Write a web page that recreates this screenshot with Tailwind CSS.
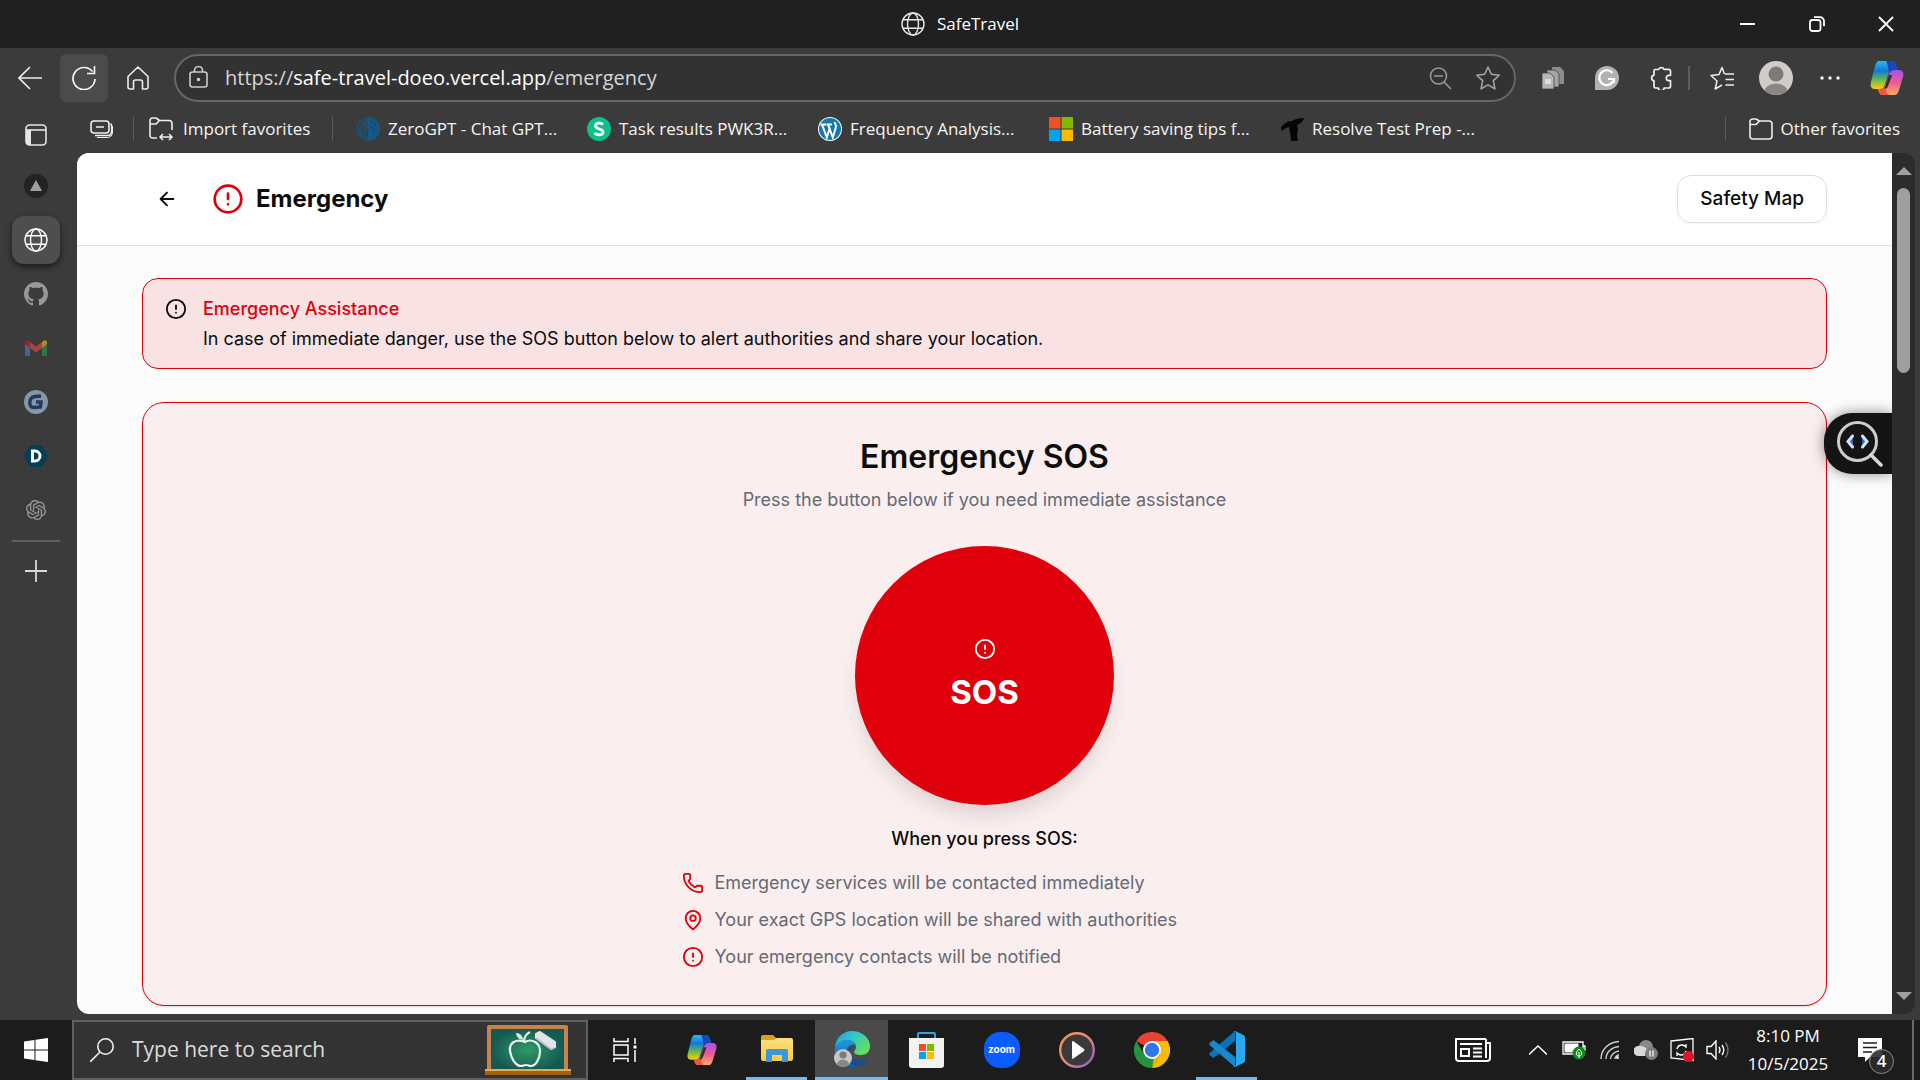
<!DOCTYPE html>
<html lang="en">
<head>
<meta charset="utf-8">
<title>SafeTravel</title>
<script src="https://cdn.jsdelivr.net/npm/@tailwindcss/browser@4"></script>
</head>
<body class="h-screen overflow-hidden bg-[#3b3b3b] font-['Open_Sans',sans-serif] text-white flex flex-col">

<svg class="absolute size-0" aria-hidden="true">
  <defs>
    <linearGradient id="cpA" x1="0" y1="0" x2="0" y2="1"><stop offset="0" stop-color="#2bb9f5"/><stop offset=".35" stop-color="#1279d8"/><stop offset=".65" stop-color="#5fb85a"/><stop offset="1" stop-color="#ffd000"/></linearGradient>
    <linearGradient id="cpB" x1="0" y1="0" x2="0" y2="1"><stop offset="0" stop-color="#a052f0"/><stop offset=".5" stop-color="#ee5a95"/><stop offset="1" stop-color="#ffab5c"/></linearGradient>
    <linearGradient id="edA" x1="0" y1="0" x2="1" y2=".6"><stop offset="0" stop-color="#1fa0dd"/><stop offset=".5" stop-color="#33c6c8"/><stop offset="1" stop-color="#63e05a"/></linearGradient>
    <linearGradient id="edB" x1="0" y1="0" x2="0" y2="1"><stop offset="0" stop-color="#1a9be0"/><stop offset="1" stop-color="#0f5cab"/></linearGradient>
    <linearGradient id="fold" x1="0" y1="0" x2="0" y2="1"><stop offset="0" stop-color="#ffe083"/><stop offset="1" stop-color="#fbc93c"/></linearGradient>
    <linearGradient id="mp" x1="0" y1="0" x2="1" y2="1"><stop offset="0" stop-color="#ff9a3c"/><stop offset=".5" stop-color="#e08a7a"/><stop offset="1" stop-color="#8a5bd6"/></linearGradient>
    <radialGradient id="board"><stop offset="0" stop-color="#2f9a68"/><stop offset="1" stop-color="#155a52"/></radialGradient>
    <symbol id="alert" viewBox="0 0 24 24"><g fill="none" stroke="currentColor" stroke-width="2" stroke-linecap="round" stroke-linejoin="round"><circle cx="12" cy="12" r="10"/><path d="M12 8v4M12 16h.01"/></g></symbol>
    <symbol id="globe" viewBox="0 0 24 24"><g fill="none" stroke="currentColor" stroke-width="1.4"><circle cx="12" cy="12" r="11"/><ellipse cx="12" cy="12" rx="5.5" ry="11"/><path d="M2 7.7h20M2 16.3h20"/></g></symbol>
    <symbol id="copilot" viewBox="0 0 34 36"><path d="M9 1h12c3 0 4 2 5 5l1 4h-4c-3 0-4 2-5 5l-3 9c-1 3-2 5-5 5H5c-4 0-5-3-4-7L5 6c1-3 2-5 4-5z" fill="url(#cpA)"/><path d="M16 1h5c3 0 4 2 5 5l1 4h-4c-2 0-3 1-4 3-1-5-1-9-3-12z" fill="#1746bd"/><path d="M25 10h4c4 0 5 3 4 7l-4 13c-1 3-2 5-5 5H13c-3 0-4-2-5-6h3c3 0 4-3 5-6l3-9c1-3 3-4 6-4z" fill="url(#cpB)"/><path d="M8 29h3c2 0 3-1 4-4 1 4 1 8 4 10h-6c-3 0-4-2-5-6z" fill="#f0553f"/><path d="M19 15h2c1 0 1 .6.700 1.400L18 26c-.6 2-1.400 2.600-2.600 2.600H14c1-1 1.500-2.600 2-4.600z" fill="#3b2a35"/></symbol>
    <symbol id="mslogo" viewBox="0 0 24 24"><path fill="#f25022" d="M0 0h11.5v11.5H0z"/><path fill="#7fba00" d="M12.5 0H24v11.5H12.5z"/><path fill="#00a4ef" d="M0 12.5h11.5V24H0z"/><path fill="#ffb900" d="M12.5 12.5H24V24H12.5z"/></symbol>
  </defs>
</svg>

<!-- Title bar -->
<header class="h-12 shrink-0 bg-[#202020] grid grid-cols-[1fr_auto_1fr] items-center">
  <span></span>
  <div class="flex items-center gap-3 text-[17px]">
    <svg class="size-6 text-[#e8e8e8]"><use href="#globe"/></svg><span>SafeTravel</span>
  </div>
  <div class="flex justify-end">
    <button class="w-[69px] h-12 grid place-items-center" aria-label="Minimize"><svg class="w-4 h-4" viewBox="0 0 16 16"><path d="M0 8h15" stroke="#fff" stroke-width="2"/></svg></button>
    <button class="w-[69px] h-12 grid place-items-center" aria-label="Restore"><svg class="w-4 h-4" viewBox="0 0 16 16" fill="none" stroke="#fff" stroke-width="1.8"><rect x="1" y="4" width="10.500" height="11" rx="2.500"/><path d="M5 1.200h6a4 4 0 0 1 4 4v5"/></svg></button>
    <button class="w-[69px] h-12 grid place-items-center" aria-label="Close"><svg class="w-4 h-4" viewBox="0 0 16 16"><path d="M1 1l14 14M15 1L1 15" stroke="#fff" stroke-width="1.800"/></svg></button>
  </div>
</header>

<!-- Toolbar -->
<div class="h-15 shrink-0 flex items-center">
  <button class="w-15 h-12 grid place-items-center" aria-label="Back"><svg class="size-6" viewBox="0 0 24 24" fill="none" stroke="#eee" stroke-width="1.600"><path d="M24 12H1M12 1L1 12l11 11"/></svg></button>
  <button class="w-12 h-12 rounded-md bg-[#4b4b4b] grid place-items-center" aria-label="Refresh"><svg class="size-6" viewBox="0 0 24 24" fill="none" stroke="#fff" stroke-width="1.600"><path d="M23 13A11 11 0 1 1 20.500 5.500M22.500 0v7.500H15"/></svg></button>
  <button class="w-15 h-12 grid place-items-center" aria-label="Home"><svg class="size-6" viewBox="0 0 24 24" fill="none" stroke="#eee" stroke-width="1.600" stroke-linejoin="round"><path d="M2 10.500L12 1l10 9.500V21a2 2 0 0 1-2 2h-3.500v-7a2 2 0 0 0-2-2h-5a2 2 0 0 0-2 2v7H4a2 2 0 0 1-2-2z"/></svg></button>
  <div class="ml-1.5 mr-2.5 h-12 flex-1 rounded-full border-2 border-[#666] bg-[#323232] flex items-center pl-3 pr-0.5">
    <svg class="size-6" viewBox="0 0 24 24" fill="none" stroke="#ccc" stroke-width="1.600"><rect x="2" y="6" width="17" height="15" rx="2.500"/><path d="M6.500 6V4.500a4 4 0 0 1 8 0V6"/><circle cx="10.500" cy="13.500" r="1" fill="#fff"/></svg>
    <a href="https://safe-travel-doeo.vercel.app/emergency" class="ml-[13px] text-[20px] leading-7 text-[#d6d6d6]">https://<span class="text-white">safe-travel-doeo.vercel.app</span>/emergency</a>
    <button class="ml-auto w-12 h-11 grid place-items-center" aria-label="Zoom"><svg class="size-6" viewBox="0 0 24 24" fill="none" stroke="#9a9a9a" stroke-width="1.500"><circle cx="10.500" cy="10" r="8"/><path d="M16 16l7 7M6 10h9"/></svg></button>
    <button class="w-12 h-11 grid place-items-center" aria-label="Add to favorites"><svg class="size-6" viewBox="0 0 24 24" fill="none" stroke="#a8a8a8" stroke-width="1.500" stroke-linejoin="round"><path d="M12 1l3.300 7.300 8 .9-6 5.400 1.700 8.200-7-4-7 4 1.700-8.200-6-5.400 8-.9z"/></svg></button>
  </div>
  <button class="w-[54px] h-12 grid place-items-center" aria-label="Documents extension"><svg class="size-6" viewBox="0 0 24 24"><path d="M11 1h8l4 4v13H11z" fill="#8c8c8c"/><path d="M6 4h8l4 4v13H6z" fill="#a4a4a4" stroke="#3b3b3b" stroke-width=".7"/><path d="M1 7h8l4 4v12H1z" fill="#b5b5b5" stroke="#3b3b3b" stroke-width=".7"/><path d="M4 13h6v5H4z" fill="#dcdcdc"/></svg></button>
  <button class="w-[54px] h-12 grid place-items-center" aria-label="Grammar extension"><svg class="size-6" viewBox="0 0 24 24"><path d="M12 0a12 12 0 1 1 0 24H0V12A12 12 0 0 1 12 0z" fill="#b2b2b2"/><path d="M17.500 7A7.400 7.400 0 1 0 19 13h-6M19 13v4" fill="none" stroke="#fff" stroke-width="2.200"/></svg></button>
  <button class="w-[54px] h-12 grid place-items-center" aria-label="Extensions"><svg class="size-6" viewBox="0 0 24 24" fill="none" stroke="#eee" stroke-width="1.700" stroke-linejoin="round"><path d="M6 3.500h3.500a3 3 0 0 1 5.500-.2h4.500a2 2 0 0 1 2 2v4H20a2.700 2.700 0 0 0 0 5.400h1.500V20a2 2 0 0 1-2 2H15a2.800 2.800 0 0 1-5.600 0H6.500A1.500 1.500 0 0 1 5 20.500v-5.600a2.900 2.900 0 0 1 0-5.700V5a1.500 1.500 0 0 1 1-1.500z"/></svg></button>
  <div class="w-[7px] h-6 border-l-2 border-[#5c5c5c]"></div>
  <button class="w-[54px] h-12 grid place-items-center" aria-label="Favorites"><svg class="size-6" viewBox="0 0 24 24" fill="none" stroke="#eee" stroke-width="1.500" stroke-linejoin="round"><path d="M14.500 8L12 1.500 9 8.500l-8 1 6 5.500-1.800 8L12 19M15 8h9M15.500 13.500H24M15.500 19H24"/></svg></button>
  <button class="w-[54px] h-12 grid place-items-center" aria-label="Profile"><svg class="size-[34px] rounded-full" viewBox="0 0 34 34"><path fill="#cfcdc9" d="M0 0h34v34H0z"/><circle cx="17" cy="13" r="7.500" fill="#7e7a78"/><ellipse cx="17" cy="32" rx="12" ry="9.500" fill="#8a8683"/></svg></button>
  <button class="w-[54px] h-12 grid place-items-center" aria-label="More"><svg class="w-5 h-1" viewBox="0 0 20 4" fill="#fff"><circle cx="2" cy="2" r="1.700"/><circle cx="10" cy="2" r="1.700"/><circle cx="18" cy="2" r="1.700"/></svg></button>
  <button class="w-15 h-12 mr-[3px] grid place-items-center" aria-label="Copilot"><svg class="w-[34px] h-9" aria-hidden="true"><use href="#copilot"/></svg></button>
</div>

<div class="flex-1 min-h-0 flex">
  <!-- Vertical tabs -->
  <nav class="w-[77px] shrink-0 flex flex-col pt-[3px]" aria-label="Tabs">
    <button class="w-[72px] h-12 grid place-items-center" aria-label="Tab actions"><svg class="size-6" viewBox="0 0 24 24"><rect x="2" y="2" width="20" height="20" rx="3.500" fill="none" stroke="#e6e6e6" stroke-width="1.600"/><path d="M2 7h5v15H5a3 3 0 0 1-3-3z" fill="#e6e6e6"/><path d="M2 7h20" stroke="#e6e6e6" stroke-width="1.600"/></svg></button>
    <button class="w-[72px] h-[54px] grid place-items-center" aria-label="Vercel"><svg class="size-6" viewBox="0 0 24 24"><circle cx="12" cy="12" r="12" fill="#232323"/><path d="M12 6l6 11H6z" fill="#a0a0a0"/></svg></button>
    <div class="w-[72px] h-[54px] grid place-items-center"><button class="size-12 rounded-xl bg-[#4e4e4e] shadow-[0_3px_6px_rgba(0,0,0,.55)] grid place-items-center" aria-label="SafeTravel"><svg class="size-6"><use href="#globe"/></svg></button></div>
    <button class="w-[72px] h-[54px] grid place-items-center" aria-label="GitHub"><svg class="size-6" viewBox="0 0 16 16" fill="#989898"><path d="M8 0C3.580 0 0 3.580 0 8c0 3.540 2.290 6.530 5.470 7.590.4.070.55-.17.55-.38 0-.19-.01-.82-.01-1.490-2.010.37-2.530-.49-2.690-.94-.09-.23-.48-.94-.82-1.130-.28-.15-.68-.52-.01-.53.63-.01 1.080.58 1.230.82.72 1.210 1.870.87 2.330.66.07-.52.28-.87.51-1.070-1.780-.2-3.640-.89-3.640-3.950 0-.87.31-1.590.82-2.150-.08-.2-.36-1.020.08-2.120 0 0 .67-.21 2.200.82.64-.18 1.320-.27 2-.27s1.360.09 2 .27c1.530-1.040 2.200-.82 2.200-.82.44 1.100.16 1.920.08 2.120.51.56.82 1.270.82 2.150 0 3.070-1.870 3.750-3.650 3.950.29.25.54.73.54 1.480 0 1.070-.01 1.930-.01 2.200 0 .21.15.46.55.38A8 8 0 0 0 16 8c0-4.420-3.580-8-8-8z"/></svg></button>
    <button class="w-[72px] h-[54px] grid place-items-center" aria-label="Gmail"><svg class="w-[22px] h-4" viewBox="0 0 22 16"><path fill="#4463a0" d="M0 3l5 4v9H1.500A1.500 1.500 0 0 1 0 14.500z"/><path fill="#33734a" d="M22 3l-5 4v9h3.500a1.500 1.500 0 0 0 1.500-1.500z"/><path fill="#b08d22" d="M17 2c3-3 5-1.500 5 1v1l-5 4z"/><path fill="#8c2b27" d="M5 2C2-1 0 .5 0 3v1l5 4z"/><path fill="#a8423a" d="M5 2l6 4.500L17 2v6l-6 4.500L5 8z"/></svg></button>
    <button class="w-[72px] h-[54px] grid place-items-center" aria-label="G site"><svg class="size-6" viewBox="0 0 24 24"><circle cx="12" cy="12" r="12" fill="#8298a6"/><path d="M17 6l-6 .5C7.500 7 5.800 9 5.800 12.500S7 17.500 10 17.500l6.500-.5.500-5H12" fill="none" stroke="#26375b" stroke-width="3.400"/></svg></button>
    <button class="w-[72px] h-[54px] grid place-items-center" aria-label="D site"><svg class="size-6" viewBox="0 0 24 24"><path d="M6 1h12l6 11-6 11H6L0 12z" fill="#053e57"/><path d="M8.500 7h2.500a5 5 0 0 1 0 10H8.500z" fill="none" stroke="#fff" stroke-width="3"/></svg></button>
    <button class="w-[72px] h-[54px] grid place-items-center" aria-label="ChatGPT"><svg class="size-5" viewBox="0 0 24 24" fill="#9a9a9a"><path d="M22.282 9.821a5.985 5.985 0 0 0-.516-4.911 6.046 6.046 0 0 0-6.510-2.900A6.065 6.065 0 0 0 4.981 4.182a5.985 5.985 0 0 0-3.998 2.900 6.046 6.046 0 0 0 .743 7.097 5.980 5.980 0 0 0 .511 4.911 6.051 6.051 0 0 0 6.515 2.900A5.985 5.985 0 0 0 13.260 24a6.056 6.056 0 0 0 5.772-4.206 5.990 5.990 0 0 0 3.998-2.900 6.056 6.056 0 0 0-.748-7.073zM13.260 22.430a4.476 4.476 0 0 1-2.876-1.041l.142-.080 4.778-2.758a.795.795 0 0 0 .393-.681v-6.737l2.020 1.169a.071.071 0 0 1 .038.052v5.583a4.504 4.504 0 0 1-4.495 4.493zM3.600 18.304a4.471 4.471 0 0 1-.535-3.014l.142.085 4.783 2.759a.771.771 0 0 0 .781 0l5.843-3.369v2.332a.080.080 0 0 1-.033.062L9.740 19.950a4.499 4.499 0 0 1-6.140-1.646zM2.341 7.896a4.485 4.485 0 0 1 2.365-1.973v5.678a.766.766 0 0 0 .388.677l5.814 3.354-2.020 1.169a.076.076 0 0 1-.071 0l-4.830-2.787A4.504 4.504 0 0 1 2.341 7.872zm16.596 3.856l-5.833-3.388 2.015-1.164a.076.076 0 0 1 .071 0l4.830 2.791a4.494 4.494 0 0 1-.676 8.105v-5.678a.790.790 0 0 0-.407-.666zm2.010-3.023l-.142-.085-4.774-2.782a.776.776 0 0 0-.785 0L9.409 9.230V6.897a.066.066 0 0 1 .028-.061l4.830-2.787a4.499 4.499 0 0 1 6.680 4.660zM8.307 12.863l-2.020-1.164a.080.080 0 0 1-.038-.057V6.075a4.499 4.499 0 0 1 7.375-3.454l-.142.081-4.778 2.758a.795.795 0 0 0-.393.681zm1.097-2.365l2.602-1.500 2.607 1.500v2.999l-2.597 1.500-2.607-1.500z"/></svg></button>
    <div class="mt-[3px] ml-3 w-12 h-0.5 bg-[#606060]"></div>
    <button class="mt-1 w-[72px] h-[50px] grid place-items-center" aria-label="New tab"><svg class="size-[22px]" viewBox="0 0 22 22"><path d="M11 0v22M0 11h22" stroke="#d8d8d8" stroke-width="1.800"/></svg></button>
  </nav>

  <div class="flex-1 min-w-0 flex flex-col">
    <!-- Favorites bar -->
    <div class="h-[45px] shrink-0 flex items-center pb-1 pl-[13px] pr-5 text-[17px] whitespace-nowrap text-[#f4f4f4]">
      <button class="w-[43px]" aria-label="Tab groups"><svg class="size-6" viewBox="0 0 24 24" fill="none" stroke="#eee" stroke-width="1.600"><rect x="1" y="4" width="18" height="12" rx="3"/><path d="M6 10h8M20.500 6.500c1 1 1.200 2 1.200 3V14c0 3-1.500 4.500-4 4.500H5"/><path d="M22.500 9v6c0 3.500-2 5.500-5 5.500H7" stroke-width="1"/></svg></button>
      <div class="w-4 h-6 border-l border-[#5a5a5a]"></div>
      <a href="#" class="flex items-center gap-2.5 w-[183px]"><svg class="w-6 h-6" viewBox="0 0 24 24" fill="none" stroke="#eee" stroke-width="1.600" stroke-linejoin="round"><path d="M8 21H3.500A2.500 2.500 0 0 1 1 18.500v-15A2.500 2.500 0 0 1 3.500 1H7l3.500 2.500H20a3 3 0 0 1 3 3V13M1 7h6l3.500-3.500M11 20h12M14 17l-3 3 3 3M20 17l3 3-3 3"/></svg>Import favorites</a>
      <div class="w-6 h-6 border-l border-[#5a5a5a]"></div>
      <a href="#" class="flex items-center gap-2 w-[231px]"><svg class="size-6" viewBox="0 0 24 24"><path d="M12 0a12 12 0 0 0 0 24z" fill="#274b63"/><path d="M12 0a12 12 0 0 1 0 24z" fill="#14588a"/><path d="M9 4c-4 1-6 4-5 8m5-3c-3 1-3 5-1 7m3-4v7M14 4c4 1 5 3 6 6m-6-1c3 1 4 4 4 7" fill="none" stroke="#2c3c48"/></svg>ZeroGPT - Chat GPT...</a>
      <a href="#" class="flex items-center gap-2 w-[231px]"><svg class="size-6" viewBox="0 0 24 24"><circle cx="12" cy="12" r="12" fill="#0dbf8c"/><path d="M16 7.500C14 5.500 8.500 5.500 8.500 9c0 3.500 7.500 2.500 7.500 6 0 3.500-6 3.500-8.500 1" fill="none" stroke="#fff" stroke-width="2.800"/></svg>Task results PWK3R...</a>
      <a href="#" class="flex items-center gap-2 w-[231px]"><svg class="size-6" viewBox="0 0 24 24"><circle cx="12" cy="12" r="12" fill="#fff"/><circle cx="12" cy="12" r="11" fill="#1477ad"/><path d="M4 7.500l4.800 13 3.200-10M10 7.500l4.800 13 3-10c1-3-1.300-3-1-5.500M2.500 7.500H8M8.500 7.500H14" fill="none" stroke="#fff" stroke-width="2"/></svg>Frequency Analysis...</a>
      <a href="#" class="flex items-center gap-2 w-[231px]"><svg class="size-6"><use href="#mslogo"/></svg>Battery saving tips f...</a>
      <a href="#" class="flex items-center gap-2 w-[231px]"><svg class="size-6" viewBox="0 0 24 24"><path d="M1 10c3-3 6-6 11-6l4-2 7-1 1 1-3 4-4 2 1 4-1 6 1 6h-7l-1-9-1-5-3 1-4 3-1-2z" fill="#050505"/></svg>Resolve Test Prep -...</a>
      <div class="ml-auto w-6 h-6 border-l border-[#5a5a5a]"></div>
      <a href="#" class="flex items-center gap-2"><svg class="size-6" viewBox="0 0 24 24" fill="none" stroke="#eee" stroke-width="1.600" stroke-linejoin="round"><path d="M1 4.500A2.500 2.500 0 0 1 3.500 2H7l3.500 2H20a3 3 0 0 1 3 3v12a3 3 0 0 1-3 3H4a3 3 0 0 1-3-3zM1 7.500h6L10.500 4"/></svg>Other favorites</a>
    </div>

    <div class="relative flex-1 min-h-0 mb-1.5 mr-[5px] flex rounded-xl overflow-hidden bg-[#2c2c2c] font-[Inter,sans-serif]">
      <!-- Web page -->
      <main class="flex-1 min-w-0 overflow-hidden bg-[#fcfcfc] text-[#0c0c0c]">
        <header class="h-[93px] bg-white border-b border-[#dcdde3] px-[65px] flex items-center">
          <button class="w-[50px] h-12 grid place-items-center" aria-label="Go back"><svg class="size-[22px]" viewBox="0 0 24 24" fill="none" stroke="currentColor" stroke-width="2" stroke-linecap="round" stroke-linejoin="round"><path d="M12 19l-7-7 7-7M19 12H5"/></svg></button>
          <svg class="ml-5 size-8 text-[#df000c]"><use href="#alert"/></svg>
          <h1 class="ml-3 text-[24px] leading-8 font-bold">Emergency</h1>
          <button class="ml-auto h-12 px-[22px] rounded-[14px] border border-[#dcdde3] shadow-xs text-[19px] font-medium">Safety Map</button>
        </header>

        <div class="px-[65px] pt-8">
          <section class="h-[91px] rounded-2xl border border-[#df000c] bg-[#f9e2e4] px-[22px] pt-[17px] flex gap-4 text-[18px] leading-[26px]">
            <svg class="mt-0.5 size-[22px]"><use href="#alert"/></svg>
            <div class="grid content-start gap-1">
              <h2 class="font-medium text-[#df000c]">Emergency Assistance</h2>
              <p>In case of immediate danger, use the SOS button below to alert authorities and share your location.</p>
            </div>
          </section>

          <section class="mt-[33px] h-[604px] rounded-[22px] border border-[#df000c] bg-[#fbeeee] shadow-sm flex flex-col items-center pt-8 text-[18px] leading-7">
            <h2 class="text-[32px] leading-11 font-semibold">Emergency SOS</h2>
            <p class="mt-[7px] text-[#646a75]">Press the button below if you need immediate assistance</p>
            <button class="mt-8 size-[259px] shrink-0 rounded-full bg-[#df000c] text-white shadow-[0_13px_20px_-4px_rgba(0,0,0,.13)] flex flex-col items-center justify-center gap-2.5">
              <svg class="size-[22px]"><use href="#alert"/></svg>
              <span class="text-[33px] leading-11 font-bold">SOS</span>
            </button>
            <h3 class="mt-5 font-medium">When you press SOS:</h3>
            <ul class="mt-4 w-full max-w-[606px] grid gap-[9px] text-[#646a75]">
              <li class="flex items-center gap-[11px]"><svg class="size-[22px] text-[#df000c]" viewBox="0 0 24 24" fill="none" stroke="currentColor" stroke-width="2" stroke-linecap="round" stroke-linejoin="round"><path d="M13.832 16.568a1 1 0 0 0 1.213-.303l.355-.465A2 2 0 0 1 17 15h3a2 2 0 0 1 2 2v3a2 2 0 0 1-2 2A18 18 0 0 1 2 4a2 2 0 0 1 2-2h3a2 2 0 0 1 2 2v3a2 2 0 0 1-.8 1.600l-.468.351a1 1 0 0 0-.292 1.233 14 14 0 0 0 6.392 6.384"/></svg>Emergency services will be contacted immediately</li>
              <li class="flex items-center gap-[11px]"><svg class="size-[22px] text-[#df000c]" viewBox="0 0 24 24" fill="none" stroke="currentColor" stroke-width="2" stroke-linecap="round" stroke-linejoin="round"><path d="M20 10c0 4.993-5.539 10.193-7.399 11.799a1 1 0 0 1-1.202 0C9.539 20.193 4 14.993 4 10a8 8 0 0 1 16 0"/><circle cx="12" cy="10" r="3"/></svg>Your exact GPS location will be shared with authorities</li>
              <li class="flex items-center gap-[11px]"><svg class="size-[22px] text-[#df000c]"><use href="#alert"/></svg>Your emergency contacts will be notified</li>
            </ul>
          </section>
        </div>
      </main>

      <button class="absolute right-[23px] top-[260px] w-17 h-[61px] rounded-l-[28px] bg-[#141414] shadow-[0_0_14px_rgba(0,0,0,.45)] flex items-center pl-[13px]" aria-label="Inspect code">
        <svg class="w-[46px] h-[46px]" viewBox="0 0 46 46" fill="none" stroke-linecap="round"><circle cx="20.500" cy="20.500" r="19" stroke="#cdcdcd" stroke-width="3"/><path d="M34 34l10 10" stroke="#d8d8d8" stroke-width="3.500"/><path d="M16 16v9l-3-4.500zM25 16v9l4-4.500z" fill="#1468f0"/><path d="M15.500 15l-4.500 5.500 4.500 5.500M25.500 15l4.500 5.500-4.500 5.500" stroke="#dce2ee" stroke-width="3"/></svg>
      </button>

      <!-- Scrollbar -->
      <div class="w-[23px] z-10 shrink-0 bg-[#2c2c2c] flex flex-col items-center pt-3.5 pb-3.5">
        <svg class="w-4 h-2" viewBox="0 0 16 8"><path d="M8 0l8 8H0z" fill="#a0a0a0"/></svg>
        <div class="mt-[13px] w-[13px] h-[185px] rounded-full bg-[#9f9f9f]"></div>
        <svg class="mt-auto w-4 h-2" viewBox="0 0 16 8"><path d="M8 8L0 0h16z" fill="#a0a0a0"/></svg>
      </div>
    </div>
  </div>
</div>

<!-- Taskbar -->
<footer class="h-15 shrink-0 bg-[#1c1c1c] flex items-stretch">
  <button class="w-[72px] grid place-items-center" aria-label="Start"><svg class="size-6" viewBox="0 0 24 24" fill="#fff"><path d="M0 3.400l10.500-1.500v9.600H0zM11.500 1.700L24 0v11.500H11.500zM0 12.500h10.500v9.600L0 20.600zM11.500 12.500H24V24l-12.500-1.700z"/></svg></button>
  <label class="w-[516px] border-2 border-[#606060] bg-[#333] flex items-center pl-4">
    <svg class="size-6 shrink-0" viewBox="0 0 24 24" fill="none" stroke="#f0f0f0" stroke-width="1.600"><circle cx="15.500" cy="8.500" r="7.700"/><path d="M10 14L0 24"/></svg>
    <input type="text" placeholder="Type here to search" aria-label="Search" class="ml-[18px] min-w-0 flex-1 bg-transparent text-[21px] placeholder:text-[#dcdcdc] outline-none">
    <svg class="mr-[15px] w-[86px] h-[52px] shrink-0" viewBox="0 0 86 52"><path d="M2 3q0-2 2-2h77q2 0 2 2v45H2z" fill="#c9824a"/><path d="M6 5h73v42H6z" fill="url(#board)"/><path d="M0 45h86v6H0z" fill="#a1640b"/><path d="M0 45h86v2H0z" fill="#e0aa63"/><path d="M40 18c-9-4-16 1-15 9 1 8 6 15 11 15 2 0 3-1 5-1s3 1 5 1c5 0 9-8 9-15 0-8-8-13-15-9zM39 18c0-5 2-8 6-10" fill="none" stroke="#e8f4ee" stroke-width="2.200"/><path d="M38 16c-5-1-7-4-7-7 4 0 7 3 7 7z" fill="#d7ebe0"/><path d="M51 10l4-2 15 10v5l-4 2-15-11z" fill="#e3e3ea" stroke="#e3e3ea" stroke-width="2" stroke-linejoin="round"/><path d="M51 14l15 11 3-1" fill="none" stroke="#b7b8c6" stroke-width="1.500"/></svg>
  </label>
  <div class="ml-0.5 flex gap-0.5">
    <button class="w-[73px] pr-1 grid place-items-center" aria-label="Task view"><svg class="size-6" viewBox="0 0 24 24" fill="none" stroke="#fff" stroke-width="1.500"><path d="M1 0v3.500h14V0M1 24v-3.500h14V24M1 7h14v10H1zM22 0v6M22 12v12"/><path d="M20.500 7.500h3v3h-3z" fill="#fff" stroke="none"/></svg></button>
    <button class="w-[73px] grid place-items-center" aria-label="Copilot"><svg class="w-[34px] h-8"><use href="#copilot"/></svg></button>
    <button class="w-[73px] px-1.5 flex flex-col items-center" aria-label="File Explorer"><span class="flex-1 grid place-items-center"><svg class="w-8 h-7" viewBox="0 0 32 28"><path d="M0 2q0-2 2-2h10l4 4v4H0z" fill="#e0a010"/><path d="M0 5h13l3-2h14q2 0 2 2v19q0 2-2 2H2q-2 0-2-2z" fill="url(#fold)"/><path d="M5 27V16q0-2 2-2h18q2 0 2 2v11h-6v-7H11v7z" fill="#3b97dd"/></svg></span><span class="h-[3px] w-full bg-[#76b9ed]"></span></button>
    <button class="w-[73px] bg-[#4a4a4a] flex flex-col items-center" aria-label="Microsoft Edge"><span class="flex-1 grid place-items-center"><svg class="size-9" viewBox="0 0 36 36"><path d="M1 18C1 8 8 0 18 0c10 0 18 7 18 15 0 6-4 9-9 9-4 0-7-1-7-3 0-1 2-2 2-5 0-4-4-7-9-7C7 9 2 13 1 18z" fill="url(#edA)"/><path d="M1 18C2 12 7 9 13 9c4 0 8 2 9 5-5-2-10 2-10 8 0 7 5 13 12 14-2 0-4 0-6 0C8 36 0 28 1 18z" fill="url(#edB)"/><path d="M12 22c0 7 6 14 13 13 4-1 8-4 9-8-5 4-13 3-17-1-2-2-2-5 1-9-4 0-6 2-6 5z" fill="#124f98"/><circle cx="9" cy="27" r="9" fill="#c8c6c3"/><circle cx="9" cy="24" r="3.600" fill="#7f7b78"/><path d="M3 33c1-6 11-6 12 0-3 4-9 4-12 0z" fill="#8a8683"/></svg></span><span class="h-[3px] w-full bg-[#76b9ed]"></span></button>
    <button class="w-[73px] grid place-items-center" aria-label="Microsoft Store"><svg class="w-[35px] h-9" viewBox="0 0 35 36"><path d="M9 8V2q0-1 1-1h15q1 0 1 1v6" fill="none" stroke="#2da4e8" stroke-width="2"/><path d="M0 6h35v27q0 3-3 3H3q-3 0-3-3z" fill="#f3f3f3"/><path fill="#f25022" d="M10 12h7v7h-7z"/><path fill="#7fba00" d="M18 12h7v7h-7z"/><path fill="#00a4ef" d="M10 20h7v7h-7z"/><path fill="#ffb900" d="M18 20h7v7h-7z"/></svg></button>
    <button class="w-[73px] grid place-items-center" aria-label="Zoom app"><span class="size-9 rounded-2xl bg-[#0b5cff] grid place-items-center pb-0.5 font-[Inter,sans-serif] text-[10px] leading-none font-bold">zoom</span></button>
    <button class="w-[73px] grid place-items-center" aria-label="Media Player"><svg class="size-9" viewBox="0 0 36 36"><circle cx="18" cy="18" r="16.800" fill="#3a3a3c" stroke="url(#mp)" stroke-width="2.400"/><path d="M13 10q0-1.500 1.500-.8L25 17q1 1 0 2l-10.500 7.600q-1.500.8-1.500-.8z" fill="#fff"/></svg></button>
    <button class="w-[73px] grid place-items-center" aria-label="Chrome"><svg class="size-9" viewBox="0 0 36 36"><path d="M18 18L2.400 9A18 18 0 0 1 33.600 9H18z" fill="#ea4335"/><path d="M18 9h15.600A18 18 0 0 1 18 36l7.800-13.500z" fill="#fbbc05"/><path d="M2.400 9l7.800 13.500L18 27l3 0-3 9A18 18 0 0 1 2.400 9z" fill="#24933f"/><path d="M18 36l7.800-13.500L18 25z" fill="#fbbc05"/><path d="M10.200 22.500C12 26 16 28 20 26.500L18 36z" fill="#24933f"/><circle cx="18" cy="18" r="9" fill="#fff"/><circle cx="18" cy="18" r="7.200" fill="#3077ec"/></svg></button>
    <button class="w-[73px] px-1.5 flex flex-col items-center" aria-label="Visual Studio Code"><span class="flex-1 grid place-items-center"><svg class="size-9" viewBox="0 0 36 36"><path d="M26 0v10L4.500 27 1 24.500q-1.500-1.500 0-3z" fill="#0a72b8"/><path d="M26 36V26L4.500 9 1 11.500q-1.500 1.500 0 3z" fill="#1588d0"/><path d="M26 0l8.500 4Q36 5 36 6.500v23q0 1.500-1.500 2.500L26 36q-1 0-2-1.500c1.500 1.500 3 .5 3-1.500V3c0-2-1.500-3-3-1.500Q25 0 26 0z" fill="#2aa8f2"/></svg></span><span class="h-[3px] w-full bg-[#76b9ed]"></span></button>
  </div>

  <div class="ml-auto flex items-center">
    <button class="w-[36px] mr-[29px]" aria-label="News"><svg class="w-9 h-6" viewBox="0 0 36 24" fill="none" stroke="#fff" stroke-width="2"><path d="M31 1H1v19q0 3 3 3h28q3 0 3-3V5h-4v15"/><path d="M31 1v19M5 6h22M18 10.500h9M18 14.500h9M18 18.500h9M6 11h8v7H6z"/></svg></button>
    <button class="w-9 grid place-items-center" aria-label="Show hidden icons"><svg class="w-[18px] h-2.5" viewBox="0 0 18 10"><path d="M0 9.500L9 1l9 8.500" fill="none" stroke="#fff" stroke-width="1.500"/></svg></button>
    <button class="w-9 grid place-items-center" aria-label="Battery"><svg class="w-6 h-5" viewBox="0 0 24 20"><path d="M1 2h20v12H1zM21 6h2v4h-2" fill="none" stroke="#fff" stroke-width="1.300"/><path d="M2.500 3.500h14v9h-14z" fill="#fff"/><circle cx="17" cy="13" r="6.500" fill="#0f8a1a"/><path d="M17 9c4 4 3 7 0 7s-4-3 0-7zM17 12v6" stroke="#fff" fill="none"/></svg></button>
    <button class="w-9 grid place-items-center" aria-label="Network"><svg class="w-5 h-5" viewBox="0 0 20 20" fill="none" stroke="#ccc" stroke-width="1.500"><path d="M1 19C1 9 9 2 19 1.500M6 19c0-7 6-12 13-12.500M10.500 19c0-4 4-7.500 8.500-8M15 19c0-2 2-4 4-4"/><circle cx="17.500" cy="17.500" r="1.500" fill="#fff" stroke="none"/></svg></button>
    <button class="w-9 grid place-items-center" aria-label="OneDrive"><svg class="w-6 h-5" viewBox="0 0 24 20"><path d="M5 7a7 7 0 0 1 14 0l1 5H6z" fill="#888"/><path d="M4 6q5-1 10 4l-3 6H5A5 5 0 0 1 4 6z" fill="#d8d8d8"/><circle cx="17.500" cy="13.500" r="6.500" fill="#7c7c7c"/><path d="M16 10.500v6M19 10.500v6" stroke="#fff" stroke-width="1.200"/></svg></button>
    <button class="w-9 grid place-items-center" aria-label="Update status"><svg class="w-6 h-6" viewBox="0 0 24 24" fill="none" stroke="#fff" stroke-width="1.300"><path d="M1 3l22-2.500v22L1 20z"/><path d="M7 11q1-4 5-4 2 0 4 2V6M16 13q-1 4-5 4-2 0-4-2v3"/><circle cx="18.500" cy="18.500" r="5.500" fill="#e81123" stroke="none"/></svg></button>
    <button class="w-9 grid place-items-center" aria-label="Volume"><svg class="w-6 h-5" viewBox="0 0 24 20" fill="none" stroke="#fff" stroke-width="1.400"><path d="M1 6.500h4L10 1v18l-5-5.500H1z"/><path d="M13 7q2 3 0 6M16 5q3.500 5 0 10"/><path d="M19.500 2.500q5 7.500 0 15" stroke="#777"/></svg></button>
    <button class="w-[104px] text-center text-[17px] leading-7" aria-label="Clock"><time>8:10 PM<br>10/5/2025</time></button>
    <button class="relative w-[72px] pr-3 h-full grid place-items-center" aria-label="4 notifications"><svg class="w-6 h-6" viewBox="0 0 24 24"><path d="M0 0h24v19H12l-5 5v-5H0z" fill="#fff"/><path d="M5 5h14M5 9.500h14M5 14h9" stroke="#1c1c1c" stroke-width="1.400"/></svg><span class="absolute left-[29px] top-[29px] size-[25px] rounded-full border border-[#8a8a8a] bg-[#2b2b2b]/90 text-[17px] leading-[22px] font-semibold text-center">4</span></button>
    <span class="h-full w-2 border-l-2 border-[#6a6a6a]"></span>
  </div>
</footer>
</body>
</html>
